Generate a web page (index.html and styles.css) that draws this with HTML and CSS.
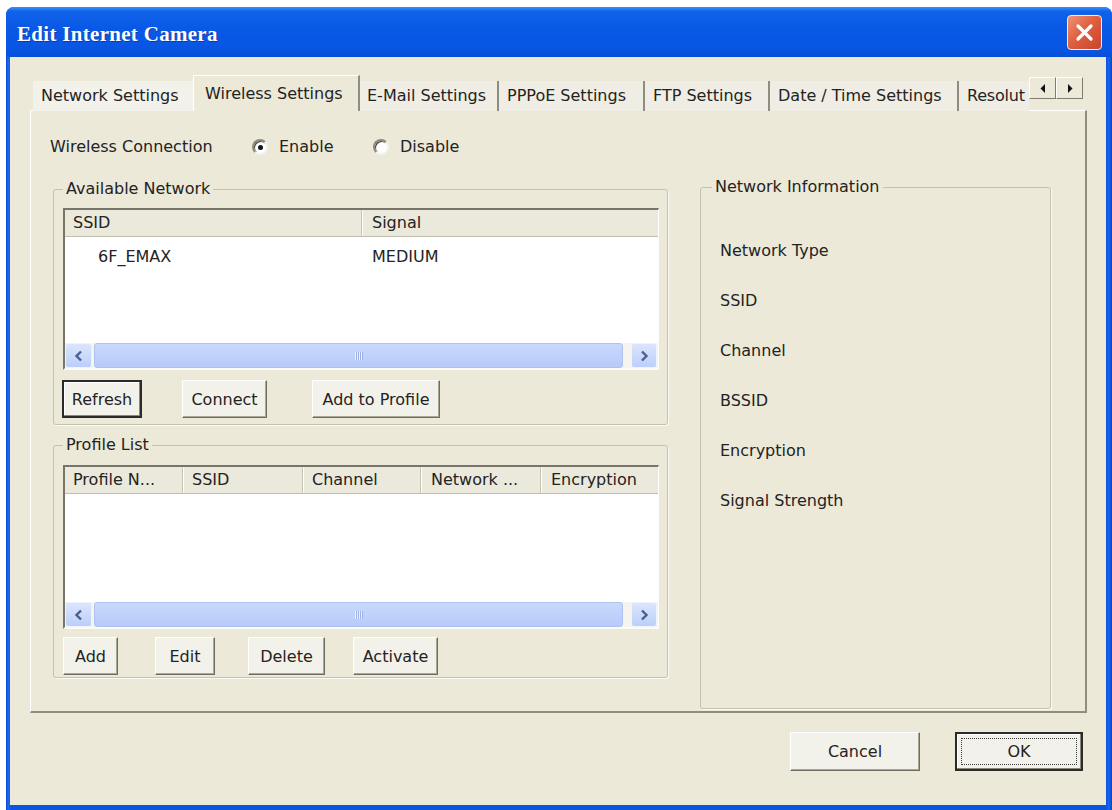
FILE: index.html
```html
<!DOCTYPE html>
<html lang="en">
<head>
    <meta charset="UTF-8">
    <title>Edit Internet Camera</title>
    <link rel="stylesheet" href="styles.css">
</head>
<body>
    <div class="window">
        <div class="titlebar">
            <span class="title">Edit Internet Camera</span>
            <button class="close" aria-label="Close">
                <svg width="19" height="19" viewBox="0 0 19 19"><path d="M3 3 L16 16 M16 3 L3 16" stroke="#fff" stroke-width="3.2" stroke-linecap="round"/></svg>
            </button>
        </div>
        <div class="client">
            <div class="tabs">
                <div class="tab-track">
                    <div class="tab tab-first">Network Settings</div>
                    <div class="tab tab-active">Wireless Settings</div>
                    <div class="tab tab-mail">E-Mail Settings</div>
                    <div class="tab tab-pppoe">PPPoE Settings</div>
                    <div class="tab tab-ftp">FTP Settings</div>
                    <div class="tab tab-date">Date / Time Settings</div>
                    <div class="tab tab-res">Resolut</div>
                </div>
                <div class="tab-arrows">
                    <span class="tab-arrow"><svg width="6" height="9" viewBox="0 0 6 9"><path d="M5 0 L5 9 L0.5 4.5 Z" fill="#111"/></svg></span>
                    <span class="tab-arrow"><svg width="6" height="9" viewBox="0 0 6 9"><path d="M1 0 L1 9 L5.5 4.5 Z" fill="#111"/></svg></span>
                </div>
            </div>

            <div class="tab-page">
                <div class="conn-row">
                    <span class="conn-label">Wireless Connection</span>
                    <label class="option option-enable"><span class="radio checked"></span>Enable</label>
                    <label class="option"><span class="radio"></span>Disable</label>
                </div>

                <div class="columns">
                    <div class="col-left">
                        <fieldset class="group group-available">
                            <legend>Available Network</legend>
                            <div class="list list-available">
                                <div class="list-head">
                                    <div class="cell c-ssid">SSID</div>
                                    <div class="cell c-signal">Signal</div>
                                </div>
                                <div class="list-body">
                                    <div class="list-row">
                                        <div class="cell c-ssid row-ssid">6F_EMAX</div>
                                        <div class="cell c-signal">MEDIUM</div>
                                    </div>
                                </div>
                                <div class="hscroll">
                                    <span class="sb-btn"><svg width="9" height="12" viewBox="0 0 9 12"><path d="M7 1.5 L2.5 6 L7 10.5" fill="none" stroke="#4a5f8e" stroke-width="2.4"/></svg></span>
                                    <span class="sb-thumb"><span class="grip"></span></span>
                                    <span class="sb-btn"><svg width="9" height="12" viewBox="0 0 9 12"><path d="M2 1.5 L6.5 6 L2 10.5" fill="none" stroke="#4a5f8e" stroke-width="2.4"/></svg></span>
                                </div>
                            </div>
                            <div class="btn-row">
                                <button class="btn btn-default btn-refresh">Refresh</button>
                                <button class="btn btn-connect">Connect</button>
                                <button class="btn btn-addprofile">Add to Profile</button>
                            </div>
                        </fieldset>

                        <fieldset class="group group-profile">
                            <legend>Profile List</legend>
                            <div class="list list-profile">
                                <div class="list-head">
                                    <div class="cell c-pname">Profile N...</div>
                                    <div class="cell c-pssid">SSID</div>
                                    <div class="cell c-pchan">Channel</div>
                                    <div class="cell c-pnet">Network ...</div>
                                    <div class="cell c-penc">Encryption</div>
                                </div>
                                <div class="list-body"></div>
                                <div class="hscroll">
                                    <span class="sb-btn"><svg width="9" height="12" viewBox="0 0 9 12"><path d="M7 1.5 L2.5 6 L7 10.5" fill="none" stroke="#4a5f8e" stroke-width="2.4"/></svg></span>
                                    <span class="sb-thumb"><span class="grip"></span></span>
                                    <span class="sb-btn"><svg width="9" height="12" viewBox="0 0 9 12"><path d="M2 1.5 L6.5 6 L2 10.5" fill="none" stroke="#4a5f8e" stroke-width="2.4"/></svg></span>
                                </div>
                            </div>
                            <div class="btn-row btn-row-profile">
                                <button class="btn btn-add">Add</button>
                                <button class="btn btn-edit">Edit</button>
                                <button class="btn btn-delete">Delete</button>
                                <button class="btn btn-activate">Activate</button>
                            </div>
                        </fieldset>
                    </div>

                    <fieldset class="group group-info">
                        <legend>Network Information</legend>
                        <div class="info-list">
                            <span>Network Type</span>
                            <span>SSID</span>
                            <span>Channel</span>
                            <span>BSSID</span>
                            <span>Encryption</span>
                            <span>Signal Strength</span>
                        </div>
                    </fieldset>
                </div>
            </div>

            <div class="dialog-buttons">
                <button class="btn btn-cancel">Cancel</button>
                <button class="btn btn-default btn-ok">OK</button>
            </div>
        </div>
    </div>
</body>
</html>
```

FILE: styles.css
```css
* {
    box-sizing: border-box;
}
body {
    margin: 0;
    background: #fff;
    font-family: "DejaVu Sans", Verdana, sans-serif;
    font-size: 16px;
    color: #232323;
}

/* window frame */
.window {
    margin: 7px 0 0 6px;
    width: 1106px;
    height: 803px;
    display: flex;
    flex-direction: column;
    background: linear-gradient(90deg, #0a3fcf 0, #1b6cf2 2px, #0a55de 5px, #0a55de calc(100% - 6px), #1a64ea calc(100% - 3px), #0a3fcf 100%);
    border-radius: 8px 8px 0 0;
}
.titlebar {
    height: 50px;
    display: flex;
    align-items: center;
    padding: 4px 10px 0 11px;
    border-radius: 8px 8px 0 0;
    background: linear-gradient(#3d8ef8 0, #0f62ec 9%, #0a59e6 40%, #0755e2 85%, #0a4fd6 100%);
}
.title {
    font-family: "Liberation Serif", "Times New Roman", serif;
    font-weight: bold;
    font-size: 21px;
    letter-spacing: 0.3px;
    color: #fff;
    text-shadow: 1px 1px 0 rgba(10, 30, 110, 0.5);
}
.close {
    margin: -4px 0 0 auto;
    width: 35px;
    height: 35px;
    padding: 0;
    display: flex;
    align-items: center;
    justify-content: center;
    border: 1px solid #f4f0ee;
    border-radius: 4px;
    background: linear-gradient(135deg, #ef9377 0, #e0603f 45%, #c9432a 100%);
}
.client {
    flex: 1;
    margin: 0 6px 5px 4px;
    padding: 18px 19px 0 20px;
    background: #ece9d8;
}

/* tab strip */
.tabs {
    display: flex;
    height: 36px;
    margin-bottom: -1px;
}
.tab-track {
    flex: 1;
    display: flex;
    align-items: flex-end;
    margin-left: 3px;
    overflow: hidden;
}
.tab {
    flex: none;
    height: 30px;
    line-height: 20px;
    padding: 5px 0 0 8px;
    white-space: nowrap;
    background: #f0eee4;
    border-right: 2px solid #8f8d81;
}
.tab-first {
    width: 160px;
    background: #f3f2ea;
    border-right: none;
}
.tab-active {
    width: 167px;
    height: 36px;
    padding: 8px 0 0 11px;
    background: #ece9d8;
    border-top: 1px solid #fff;
    border-left: 1px solid #fff;
    position: relative;
    z-index: 1;
}
.tab-mail { width: 139px; padding-left: 7px; }
.tab-pppoe { width: 146px; }
.tab-ftp { width: 125px; }
.tab-date { width: 189px; }
.tab-res { flex: 1; border-right: none; letter-spacing: -0.2px; }

.tab-arrows {
    display: flex;
    margin: 2px 4px 0 0;
    height: 22px;
}
.tab-arrow {
    width: 27px;
    height: 22px;
    display: flex;
    align-items: center;
    justify-content: center;
    background: #ece9d8;
    border: 1px solid;
    border-color: #fff #7f7d72 #7f7d72 #fff;
}

/* tab page */
.tab-page {
    height: 603px;
    padding-left: 19px;
    background: #ece9d8;
    border-top: 1px solid #fff;
    border-left: 1px solid #fff;
    border-right: 2px solid #8f8d81;
    border-bottom: 2px solid #8f8d81;
}
.conn-row {
    display: flex;
    align-items: center;
    margin-top: 26px;
    height: 20px;
    line-height: 20px;
}
.conn-label {
    width: 202px;
}
.option {
    display: flex;
    align-items: center;
    gap: 11px;
}
.option-enable {
    width: 121px;
}
.radio {
    position: relative;
    width: 16px;
    height: 16px;
    border-radius: 50%;
    background: #fff;
    border: 2px solid;
    border-color: #8d8a7e #f4f3ee #f4f3ee #8d8a7e;
    box-shadow: inset 1px 1px 0 #3f3e39;
}
.radio.checked::after {
    content: "";
    position: absolute;
    left: 4px;
    top: 4px;
    width: 5px;
    height: 5px;
    border-radius: 50%;
    background: #111;
}

.columns {
    display: flex;
    align-items: flex-start;
    margin: 22px 0 0 3px;
}
.col-left {
    width: 615px;
}

/* group boxes */
.group {
    margin: 0;
    min-width: 0;
    padding: 9px 8px 6px 9px;
    border: 1px solid #c4c1b1;
    border-radius: 3px;
    box-shadow: 1px 1px 0 #fbfaf5;
}
.group legend {
    padding: 0 3px;
    line-height: 20px;
}
.group-profile {
    margin-top: 10px;
    padding-top: 10px;
    padding-bottom: 2px;
}
.group-info {
    width: 351px;
    height: 532px;
    margin: -2px 0 0 32px;
    padding: 44px 10px 0 19px;
}
.group-info legend {
    margin-left: -8px;
}
.info-list {
    display: flex;
    flex-direction: column;
    gap: 30px;
    line-height: 20px;
}

/* list views */
.list {
    display: flex;
    flex-direction: column;
    background: #fff;
    border-top: 2px solid #77756a;
    border-left: 2px solid #77756a;
    border-right: 1px solid #fff;
    border-bottom: 2px solid #fbfbf8;
}
.list-available { height: 162px; }
.list-profile { height: 164px; }
.list-head {
    display: flex;
    height: 27px;
    background: #ebe9dc;
    border-bottom: 1px solid #c1beae;
    line-height: 26px;
}
.cell {
    flex: none;
    padding-left: 8px;
    white-space: nowrap;
    overflow: hidden;
}
.list-head .cell {
    border-right: 1px solid #c6c3b4;
    box-shadow: 1px 0 0 #fff;
}
.list-head .cell:last-child {
    border-right: none;
    box-shadow: none;
}
.c-ssid { width: 297px; }
.c-signal { flex: 1; padding-left: 10px; }
.c-pname { width: 118px; }
.c-pssid { width: 120px; padding-left: 9px; }
.c-pchan { width: 118px; padding-left: 9px; }
.c-pnet { width: 120px; padding-left: 10px; }
.c-penc { flex: 1; padding-left: 10px; }
.list-body {
    flex: 1;
}
.list-row {
    display: flex;
    margin-top: 10px;
    line-height: 20px;
}
.row-ssid {
    padding-left: 33px;
}

/* horizontal scroll bar */
.hscroll {
    display: flex;
    height: 25px;
    padding-right: 1px;
    background: #f5f4ef;
}
.sb-btn {
    width: 27px;
    display: flex;
    align-items: center;
    justify-content: center;
    background: linear-gradient(#dbe5fd, #bccffa);
    border: 1px solid #eef3fe;
    border-radius: 3px;
}
.sb-btn:last-child {
    width: 26px;
}
.sb-thumb {
    flex: 1;
    margin: 0 8px 0 2px;
    display: flex;
    align-items: center;
    justify-content: center;
    background: linear-gradient(#c9d9fd, #b7cbf9);
    border: 1px solid #adc2f3;
    border-radius: 3px;
}
.grip {
    width: 8px;
    height: 8px;
    background: repeating-linear-gradient(90deg, #eef3fe 0 1px, #98aee3 1px 2px);
}

/* push buttons */
.btn-row {
    display: flex;
    margin-top: 10px;
}
.btn-row-profile {
    margin-top: 8px;
}
.btn {
    height: 38px;
    padding: 0;
    font-family: inherit;
    font-size: 16px;
    color: #232323;
    background: #f3f2ea;
    border: 1px solid;
    border-color: #fff #6f6d62 #6f6d62 #fff;
    box-shadow: inset -1px -1px 0 #aaa797;
}
.btn-default {
    border: 2px solid #2c2b27;
    box-shadow: inset -1px -1px 0 #8a877a, inset 1px 1px 0 #fff;
}
.btn-refresh { width: 80px; margin-left: -1px; }
.btn-connect { width: 85px; margin-left: 40px; }
.btn-addprofile { width: 128px; margin-left: 45px; }
.btn-add { width: 55px; }
.btn-edit { width: 60px; margin-left: 37px; }
.btn-delete { width: 77px; margin-left: 33px; }
.btn-activate { width: 85px; margin-left: 28px; }

.dialog-buttons {
    display: flex;
    justify-content: flex-end;
    gap: 35px;
    margin-top: 19px;
    padding-right: 4px;
}
.btn-cancel {
    width: 130px;
    height: 39px;
}
.btn-ok {
    width: 128px;
    height: 39px;
    outline: 1px dotted #3a3a3a;
    outline-offset: -7px;
}
```
